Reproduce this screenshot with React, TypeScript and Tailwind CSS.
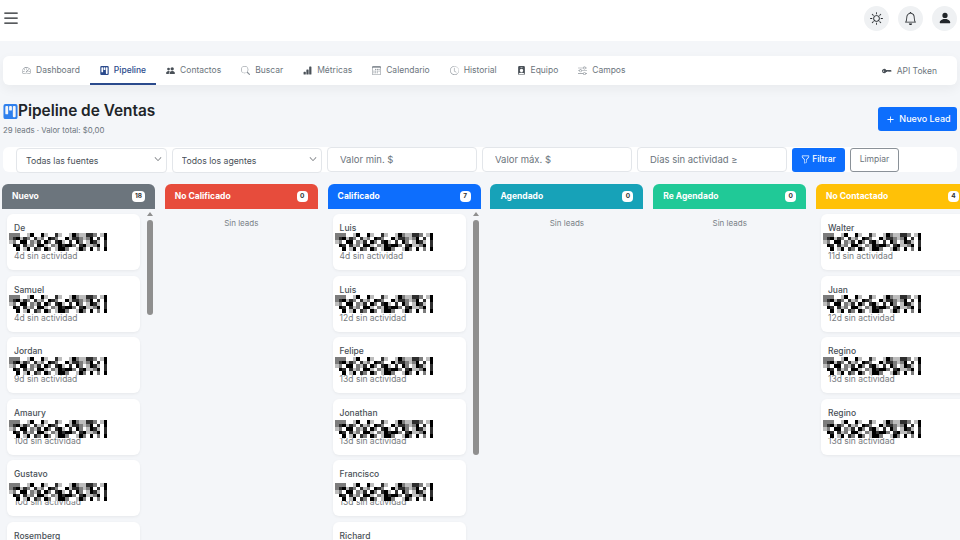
import {
  BsList, BsSun, BsBell, BsPersonFill, BsSpeedometer2, BsKanbanFill, BsPeopleFill, BsSearch,
  BsBarChartFill, BsCalendar3, BsClockHistory, BsPersonBadgeFill, BsSliders, BsKeyFill, BsPlus,
  BsFunnel, BsChevronDown,
} from "react-icons/bs";
import type { IconType } from "react-icons";

const font = "font-['Inter','Liberation_Sans',sans-serif]";

const tabs: { label: string; icon: IconType; active?: boolean; tone?: string }[] = [
  { label: "Dashboard", icon: BsSpeedometer2, tone: "text-[#8a9198]" },
  { label: "Pipeline", icon: BsKanbanFill, active: true },
  { label: "Contactos", icon: BsPeopleFill, tone: "text-[#495057]" },
  { label: "Buscar", icon: BsSearch, tone: "text-[#8a9198]" },
  { label: "Métricas", icon: BsBarChartFill, tone: "text-[#495057]" },
  { label: "Calendario", icon: BsCalendar3, tone: "text-[#8a9198]" },
  { label: "Historial", icon: BsClockHistory, tone: "text-[#8a9198]" },
  { label: "Equipo", icon: BsPersonBadgeFill, tone: "text-[#495057]" },
  { label: "Campos", icon: BsSliders, tone: "text-[#8a9198]" },
];

// redacted phone/mail block, same mosaic on every card
const mosaic = [
  "2220014004100310014211332014",
  "2341320312043200413321240304",
  "1204402130420341030420143103",
  "0430312044102143442034112403",
  "0040140320420144200142040204",
];
const shades = ["#ffffff", "#bdbdbd", "#7c7c7c", "#2e2e2e", "#000000"];

const Mosaic = () => (
  <svg width="98" height="18" viewBox="0 0 28 5" shapeRendering="crispEdges" preserveAspectRatio="none" className="blur-[0.3px]">
    {mosaic.map((row, y) =>
      row.split("").map((c, x) => <rect key={`${x}-${y}`} x={x} y={y} width="1" height="1" fill={shades[Number(c)]} />)
    )}
  </svg>
);

type Lead = { name: string; days: string; top: string };

const LeadCard = ({ lead }: { lead: Lead }) => (
  <div className="h-[56px] shrink-0 rounded-md bg-white px-[7px] pt-[7px] shadow-[0_1px_3px_rgba(0,0,0,0.06)]">
    <p className="h-[14px] text-[8.5px] leading-[14px] font-medium text-[#495057]">{lead.name}</p>
    <div className="relative h-[15px]">
      <div className={`absolute left-[-5px] ${lead.top}`}>
        <Mosaic />
      </div>
    </div>
    <p className="text-[8.5px] leading-[12px] text-[#777b80]">{lead.days} sin actividad</p>
  </div>
);

const ScrollBar = ({ thumb }: { thumb: string }) => (
  <div className="flex w-[6px] shrink-0 flex-col items-center">
    <div className="h-0 w-0 border-x-[3px] border-b-[4px] border-x-transparent border-b-[#8f8f8f]" />
    <div className={`mt-[4px] w-[6px] shrink-0 rounded-full bg-[#8f8f8f] ${thumb}`} />
  </div>
);

type Column = { title: string; count: number; color: string; leads: Lead[]; thumb?: string };

const columns: Column[] = [
  {
    title: "Nuevo", count: 18, color: "bg-[#6c757d]", thumb: "h-[95px]",
    leads: [
      { name: "De", days: "4d", top: "top-[-2px]" },
      { name: "Samuel", days: "4d", top: "top-[-2px]" },
      { name: "Jordan", days: "9d", top: "top-[-1px]" },
      { name: "Amaury", days: "10d", top: "top-[0px]" },
      { name: "Gustavo", days: "10d", top: "top-[2px]" },
      { name: "Rosemberg", days: "11d", top: "top-[3px]" },
    ],
  },
  { title: "No Calificado", count: 0, color: "bg-[#e74c3c]", leads: [] },
  {
    title: "Calificado", count: 7, color: "bg-[#0d6efd]", thumb: "h-[235px]",
    leads: [
      { name: "Luis", days: "4d", top: "top-[-2px]" },
      { name: "Luis", days: "12d", top: "top-[-2px]" },
      { name: "Felipe", days: "13d", top: "top-[-1px]" },
      { name: "Jonathan", days: "13d", top: "top-[0px]" },
      { name: "Francisco", days: "13d", top: "top-[2px]" },
      { name: "Richard", days: "13d", top: "top-[3px]" },
    ],
  },
  { title: "Agendado", count: 0, color: "bg-[#17a2b8]", leads: [] },
  { title: "Re Agendado", count: 0, color: "bg-[#20c997]", leads: [] },
  {
    title: "No Contactado", count: 4, color: "bg-[#ffc107]",
    leads: [
      { name: "Walter", days: "11d", top: "top-[-2px]" },
      { name: "Juan", days: "12d", top: "top-[-2px]" },
      { name: "Regino", days: "13d", top: "top-[-1px]" },
      { name: "Regino", days: "13d", top: "top-[0px]" },
    ],
  },
];

const BoardColumn = ({ col }: { col: Column }) => (
  <div className="flex min-h-0 w-[153px] shrink-0 flex-col">
    <div className={`flex h-[25px] shrink-0 items-center justify-between rounded-t-md pr-[3px] pl-[10px] ${col.color}`}>
      <span className="text-[8.5px] font-bold text-white">{col.title}</span>
      <span className="mr-[7px] flex h-[11px] min-w-[11px] items-center justify-center rounded-[4px] bg-white px-[3px] text-[6.5px] font-bold text-[#333]">
        {col.count}
      </span>
    </div>
    {col.leads.length === 0 ? (
      <p className="pt-[9px] text-center text-[8px] leading-[10px] text-[#7a8288]">Sin leads</p>
    ) : (
      <div className="flex gap-[7px] pt-[3px] pr-[2px] pl-[5px]">
        <div className="flex flex-1 flex-col gap-[5.5px] pt-[2px]">
          {col.leads.map((l, i) => (
            <LeadCard key={i} lead={l} />
          ))}
        </div>
        {col.thumb && <ScrollBar thumb={col.thumb} />}
      </div>
    )}
  </div>
);

const fieldClass =
  "h-[25px] rounded-[4px] border border-[#e3e6ea] bg-white px-[12px] text-[9.5px] text-[#495057] outline-none placeholder:text-[#6c757d]";

const App = () => {
  return (
    <div className={`flex h-screen flex-col overflow-hidden bg-[#f4f6f9] ${font}`}>
      <header className="flex h-[41px] shrink-0 items-center justify-between bg-white pr-[3px] pb-[5px] pl-[1px]">
        <BsList className="text-[20px] text-[#212529]" />
        <div className="flex items-center gap-[9px]">
          <span className="flex h-[25px] w-[25px] items-center justify-center rounded-full bg-[#eff1f3] text-[#212529]">
            <BsSun className="text-[13px]" />
          </span>
          <span className="flex h-[25px] w-[25px] items-center justify-center rounded-full bg-[#eff1f3] text-[#212529]">
            <BsBell className="text-[13px]" />
          </span>
          <span className="flex h-[25px] w-[25px] items-center justify-center rounded-full bg-[#eff1f3] text-[#212529]">
            <BsPersonFill className="text-[14px]" />
          </span>
        </div>
      </header>

      <nav className="mx-[3px] mt-[15px] flex h-[29px] shrink-0 items-stretch justify-between rounded-md bg-white px-[9px] shadow-[0_4px_12px_rgba(0,0,0,0.05)]">
        <div className="flex">
          {tabs.map((t) => (
            <a
              key={t.label}
              className={`flex items-center gap-[5px] border-b-2 px-[10px] pt-[2px] text-[8.5px] ${
                t.active ? "border-[#2a4a8c] font-medium text-[#2a4a8c]" : "border-transparent text-[#6c757d]"
              }`}
            >
              <t.icon className={`text-[9px] ${t.active ? "text-[#2a4a8c]" : t.tone}`} />
              {t.label}
            </a>
          ))}
        </div>
        <a className="flex items-center gap-[5px] pt-[1px] pr-[11px] text-[8.5px] text-[#6c757d]">
          <BsKeyFill className="text-[10px] text-[#495057]" />
          API Token
        </a>
      </nav>

      <div className="mx-[3px] mt-[16px] flex shrink-0 items-start justify-between">
        <div>
          <h1 className="flex items-center text-[15.4px] leading-[20px] font-semibold text-[#212529]">
            <BsKanbanFill className="text-[15px] text-[#2f80ed]" />
            Pipeline de Ventas
          </h1>
          <p className="mt-[3px] text-[7.8px] leading-[12px] text-[#6c757d]">29 leads · Valor total: $0,00</p>
        </div>
        <button className="mt-[6px] flex h-[24px] w-[79px] items-center justify-center gap-[2px] rounded-[3px] bg-[#0d6efd] text-[9px] font-medium text-white">
          <BsPlus className="text-[13px]" />
          Nuevo Lead
        </button>
      </div>

      <div className="mx-[3px] mt-[11px] flex h-[25px] shrink-0 items-center gap-[5px] rounded-md bg-white pl-[13px]">
        {["Todas las fuentes", "Todos los agentes"].map((s) => (
          <div key={s} className="relative">
            <select className={`${fieldClass} w-[150.5px] appearance-none pt-[1px] pl-[9px] !text-[8.7px]`}>
              <option>{s}</option>
            </select>
            <BsChevronDown className="absolute top-[9px] right-[5px] text-[8px] text-[#343a40]" />
          </div>
        ))}
        <input className={`${fieldClass} w-[150px]`} placeholder="Valor min. $" />
        <input className={`${fieldClass} w-[150px]`} placeholder="Valor máx. $" />
        <input className={`${fieldClass} w-[150px]`} placeholder="Días sin actividad ≥" />
        <button className="flex h-[24px] w-[53px] items-center justify-center gap-[2px] rounded-[3px] bg-[#0d6efd] text-[8.5px] font-medium text-white">
          <BsFunnel className="text-[9px]" />
          Filtrar
        </button>
        <button className="h-[24px] w-[49px] rounded-[3px] border border-[#8a9198] text-[8.5px] text-[#6c757d]">
          Limpiar
        </button>
      </div>

      <div className="mt-[12px] flex min-h-0 flex-1 gap-[9.8px] overflow-hidden pl-[2px]">
        {columns.map((c) => (
          <BoardColumn key={c.title} col={c} />
        ))}
      </div>
    </div>
  );
};

export default App;
